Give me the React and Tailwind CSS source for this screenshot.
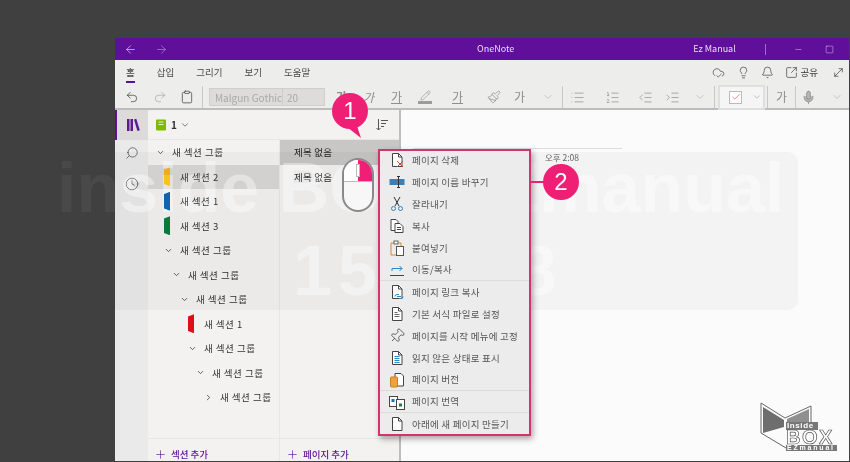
import {
  ArrowLeft, ArrowRight, Bell, Check, ChevronDown, ChevronRight, Clipboard, Clock, CloudCheck, Lightbulb,
  IndentDecrease, IndentIncrease, List, ListOrdered, Minus, MoveDiagonal, Paintbrush, Pencil, Plus, Redo2, Search,
  SquareArrowOutUpRight, Square, Undo2, Mic, Pin,
} from "lucide-react";

const FONT = "font-['Noto_Sans_CJK_KR','Noto_Sans',sans-serif]";

const TABS = ["홈", "삽입", "그리기", "보기", "도움말"];

const SECTIONS = [
  { label: "새 섹션 그룹", indent: 8, chevron: "down" },
  { label: "새 섹션 2", indent: 16, color: "bg-[#f6b21b]", active: true },
  { label: "새 섹션 1", indent: 16, color: "bg-[#0f5a9c]" },
  { label: "새 섹션 3", indent: 16, color: "bg-[#0b7d3e]" },
  { label: "새 섹션 그룹", indent: 16, chevron: "down" },
  { label: "새 섹션 그룹", indent: 24, chevron: "down" },
  { label: "새 섹션 그룹", indent: 32, chevron: "down" },
  { label: "새 섹션 1", indent: 40, color: "bg-[#dd0f1c]" },
  { label: "새 섹션 그룹", indent: 40, chevron: "down" },
  { label: "새 섹션 그룹", indent: 48, chevron: "down" },
  { label: "새 섹션 그룹", indent: 56, chevron: "right" },
];

function Doc({ children }) {
  return (
    <svg viewBox="0 0 16 16" className="h-4 w-4" fill="none" stroke="#444" strokeWidth="1">
      <path d="M3.5 1.5h6l3.5 3.5v9.5h-9.5z" fill="#fff" />
      <path d="M9.5 1.5v3.5h3.5" />
      {children}
    </svg>
  );
}

const MENU = [
  { label: "페이지 삭제", icon: <Doc><path d="M8 9l6 6M14 9l-6 6" stroke="#d8453c" /></Doc> },
  {
    label: "페이지 이름 바꾸기",
    icon: (
      <svg viewBox="0 0 16 16" className="h-4 w-4">
        <rect x="0.5" y="5" width="15" height="6" fill="#3f7fb5" />
        <path d="M8 2.5h3M9.5 2.5v11M8 13.5h3" stroke="#333" fill="none" />
      </svg>
    ),
  },
  {
    label: "잘라내기",
    icon: (
      <svg viewBox="0 0 16 16" className="h-4 w-4" fill="none" stroke="#333">
        <path d="M5 1l5 9M11 1l-5 9" />
        <circle cx="4.5" cy="12.5" r="2" stroke="#2f86c5" />
        <circle cx="11.5" cy="12.5" r="2" stroke="#2f86c5" />
      </svg>
    ),
  },
  {
    label: "복사",
    icon: (
      <svg viewBox="0 0 16 16" className="h-4 w-4" fill="#fff" stroke="#444">
        <path d="M2 1.5h5l2 2v9H2z" />
        <path d="M6 5.5h5l3 3v6H6z" />
        <path d="M8 9.5h4M8 11.5h4" />
      </svg>
    ),
  },
  {
    label: "붙여넣기",
    icon: (
      <svg viewBox="0 0 16 16" className="h-4 w-4" fill="none" stroke="#d98a2b">
        <path d="M2 3h10v12H2z" />
        <rect x="5" y="1" width="4" height="3" fill="#fff" stroke="#666" />
        <rect x="7.5" y="6.5" width="7" height="9" fill="#fff" stroke="#555" />
      </svg>
    ),
  },
  {
    label: "이동/복사",
    divider: true,
    icon: (
      <svg viewBox="0 0 16 16" className="h-4 w-4" fill="none" stroke="#2f86c5">
        <path d="M3 9V6.5h10M10.5 4l2.5 2.5L10.5 9" />
        <path d="M1 13.5h14" stroke="#444" />
      </svg>
    ),
  },
  {
    label: "페이지 링크 복사",
    icon: <Doc><path d="M6 12.5a2 2 0 0 1 2-2h2M14 12.5a2 2 0 0 1-2 2h-2M8 12.5h4" stroke="#2f86c5" /></Doc>,
  },
  { label: "기본 서식 파일로 설정", icon: <Doc><path d="M5.5 6.5h3M5.5 8.5h5M5.5 10.5h5" stroke="#666" /></Doc> },
  { label: "페이지를 시작 메뉴에 고정", icon: <Pin className="h-4 w-4 rotate-45 text-[#444]" strokeWidth={1.2} /> },
  { label: "읽지 않은 상태로 표시", icon: <Doc><path d="M5.5 6.5h5M5.5 8.5h5M5.5 10.5h5M5.5 12.5h5" stroke="#2f86c5" /></Doc> },
  {
    label: "페이지 버전",
    divider: true,
    icon: (
      <svg viewBox="0 0 16 16" className="h-4 w-4">
        <path d="M6 1.5h6l2.5 2.5v10H6z" fill="#fff" stroke="#444" />
        <rect x="1.5" y="5" width="7" height="10" rx="1" fill="#eda33b" stroke="#c87f22" />
      </svg>
    ),
  },
  {
    label: "페이지 번역",
    divider: true,
    icon: (
      <svg viewBox="0 0 16 16" className="h-4 w-4">
        <rect x="0.5" y="2.5" width="8" height="10" fill="#fff" stroke="#444" />
        <rect x="7.5" y="5.5" width="8" height="10" fill="#fff" stroke="#444" />
        <rect x="2.5" y="5" width="3" height="3" fill="#1f6fb2" />
        <rect x="10" y="9.5" width="3" height="3" fill="#227a3d" />
      </svg>
    ),
  },
  { label: "아래에 새 페이지 만들기", icon: <Doc /> },
];

function RibbonText({ children, underline, className = "" }) {
  return (
    <span className={`w-[12px] text-[12px] leading-none text-[#8f8f8f] ${underline ? "underline" : ""} ${className}`}>
      {children}
    </span>
  );
}

function Toolbar() {
  return (
    <div className="flex h-[26px] items-center pl-[10px] text-[#8a8a8a]">
      <Undo2 className="h-[14px] w-[14px] text-[#444]" strokeWidth={1.3} />
      <Redo2 className="ml-[14px] h-[14px] w-[14px] text-[#aaa]" strokeWidth={1.3} />
      <Clipboard className="ml-[13px] h-[14px] w-[14px] text-[#444]" strokeWidth={1.3} />
      <span className="ml-[8px] h-[22px] w-px bg-[#c8c8c8]" />
      <div className="ml-[6px] flex h-[18px] w-[116px] items-center border border-[#d0cdca] bg-[#dedcda] text-[10px] text-[#a9a9a9]">
        <span className="w-[72px] overflow-hidden whitespace-nowrap pl-[5px]">Malgun Gothic</span>
        <span className="h-full w-px bg-[#cfcdcb]" />
        <span className="pl-[4px]">20</span>
      </div>
      <RibbonText className="ml-[11px] font-bold">가</RibbonText>
      <RibbonText className="ml-[15px] italic">가</RibbonText>
      <RibbonText className="ml-[16px]" underline>가</RibbonText>
      <span className="ml-[15px] flex w-[14px] flex-col items-center">
        <Pencil className="h-[11px] w-[11px]" strokeWidth={1.2} />
        <span className="h-[3px] w-[14px] bg-[#9c9c9c]" />
      </span>
      <RibbonText className="ml-[20px]" underline>가</RibbonText>
      <Paintbrush className="ml-[23px] h-[14px] w-[14px]" strokeWidth={1.2} />
      <RibbonText className="ml-[13px]">가</RibbonText>
      <ChevronDown className="ml-[16px] h-[12px] w-[12px] text-[#aaa]" strokeWidth={1.2} />
      <span className="ml-[8px] h-[22px] w-px bg-[#c8c8c8]" />
      <List className="ml-[7px] h-[15px] w-[15px]" strokeWidth={1.1} />
      <ListOrdered className="ml-[20px] h-[15px] w-[15px]" strokeWidth={1.1} />
      <IndentDecrease className="ml-[18px] h-[15px] w-[15px]" strokeWidth={1.1} />
      <IndentIncrease className="ml-[12px] h-[15px] w-[15px]" strokeWidth={1.1} />
      <ChevronDown className="ml-[14px] h-[12px] w-[12px] text-[#aaa]" strokeWidth={1.2} />
      <span className="ml-[8px] h-[22px] w-px bg-[#c8c8c8]" />
      <div className="ml-[3px] flex h-[25px] w-[47px] items-center border-2 border-[#dfdfdf] bg-[#f5f5f5] pl-[9px]">
        <span className="flex h-[13px] w-[13px] items-center justify-center border border-[#bbb] bg-white">
          <Check className="h-[10px] w-[10px] text-[#d8453c]" strokeWidth={1.5} />
        </span>
        <ChevronDown className="ml-[10px] h-[10px] w-[10px]" strokeWidth={1.2} />
      </div>
      <span className="ml-[2px] h-[22px] w-px bg-[#c8c8c8]" />
      <RibbonText className="ml-[8px]">가</RibbonText>
      <span className="ml-[7px] h-[22px] w-px bg-[#c8c8c8]" />
      <Mic className="ml-[5px] h-[15px] w-[15px] fill-[#b5b5b5]" strokeWidth={1.2} />
      <ChevronDown className="ml-[15px] h-[12px] w-[12px] text-[#aaa]" strokeWidth={1.2} />
    </div>
  );
}

function LibraryIcon() {
  return (
    <svg viewBox="0 0 14 14" className="h-[14px] w-[14px]" fill="#5d1a8f">
      <rect x="1" y="1" width="2.5" height="12" />
      <rect x="4.5" y="1" width="2.5" height="12" />
      <path d="M8 1.5l2.3-.8 3.500 11.500-2.400.8z" />
    </svg>
  );
}

function SortIcon() {
  return (
    <svg viewBox="0 0 14 14" className="h-[14px] w-[14px]" fill="none" stroke="#555">
      <path d="M3.5 1v11M1.5 10l2 2 2-2M6 2.5h7M6 5.5h5M6 8.5h3" />
    </svg>
  );
}

function Logo() {
  return (
    <div className="absolute left-[760px] top-[402px] h-[48px] w-[78px]">
      <svg viewBox="0 0 78 48" className="absolute inset-0 h-full w-full" fill="none">
        <path d="M1 1l24 15 26-12v17M1 1v30l25 15" stroke="#666" />
        <path d="M3 5l21 13v7L3 31z" fill="#6e6e6e" />
        <path d="M27 17l22-10v13H27z" fill="#8f8f8f" />
      </svg>
      <div className="absolute left-[26px] top-[20px] flex w-[51px] flex-col font-['Liberation_Sans',sans-serif] font-bold leading-none text-white">
        <span className="w-[32px] bg-[#777] pl-[1px] text-[8px] leading-[8px] tracking-[0.6px]">Inside</span>
        <span className="text-[20px] leading-[15px] tracking-[1.5px] text-white [-webkit-text-stroke:0.7px_#555]">BOX</span>
        <span className="bg-[#777] pl-[1px] text-[7px] leading-[6px] tracking-[1.8px]">EZmanual</span>
      </div>
    </div>
  );
}

function Callout({ n, className }) {
  return (
    <div
      className={`absolute flex h-[36px] w-[36px] items-center justify-center rounded-full bg-[#ee1f74] font-['Liberation_Sans',sans-serif] text-[24px] text-white ${className}`}
    >
      {n}
    </div>
  );
}

function MouseIcon() {
  return (
    <div className="absolute left-[342px] top-[158px] h-[54px] w-[32px] overflow-hidden rounded-[16px] border-2 border-[#8a8a8a] bg-[#f7f7f7]">
      <div className="flex h-[22px] border-b border-[#bbb]">
        <div className="w-[14px] bg-white" />
        <div className="flex-1 bg-[#ee1f74]" />
      </div>
      <span className="absolute left-[12px] top-[4px] h-[13px] w-[4px] border border-[#bbb] bg-white" />
    </div>
  );
}

export default function App() {
  return (
    <div className={`relative h-[462px] w-[850px] overflow-hidden bg-[#404040] pl-[115px] pt-[38px] pr-px pb-px ${FONT}`}>
      <div className="flex h-full flex-col bg-[#fbfbfb]">
        <div className="flex h-[22px] items-center bg-[#5f0f99] text-[9px] text-[#e9dcf2]">
          <ArrowLeft className="ml-[9px] h-[13px] w-[13px]" strokeWidth={1.2} />
          <ArrowRight className="ml-[18px] h-[13px] w-[13px] text-[#b894d2]" strokeWidth={1.2} />
          <span className="ml-[309px]">OneNote</span>
          <span className="ml-[179px]">Ez Manual</span>
          <span className="ml-[29px] h-[11px] w-px bg-[#9c6fc0]" />
          <Minus className="ml-[28px] h-[9px] w-[9px]" strokeWidth={1.2} />
          <Square className="ml-[22px] h-[9px] w-[9px]" strokeWidth={1.2} />
        </div>

        <div className="h-[50px] border-b-2 border-[#bdbdbd] bg-[#ededec]">
          <div className="flex h-[24px] items-center pl-[11px] text-[9.5px] text-[#4a4a4a]">
            {TABS.map((t, i) => (
              <span key={t} className={`relative mr-[22px] ${i === 0 ? "font-medium" : ""}`}>
                {t}
                {i === 0 && <span className="absolute -bottom-[4px] left-0 h-[2px] w-full bg-[#5f0f99]" />}
              </span>
            ))}
            <div className="ml-auto flex items-center pr-[4px] text-[#333]">
              <CloudCheck className="h-[13px] w-[13px]" strokeWidth={1.2} />
              <Lightbulb className="ml-[12px] h-[13px] w-[13px]" strokeWidth={1.2} />
              <Bell className="ml-[11px] h-[13px] w-[13px]" strokeWidth={1.2} />
              <SquareArrowOutUpRight className="ml-[11px] h-[13px] w-[13px]" strokeWidth={1.2} />
              <span className="ml-[3px] text-[9.5px]">공유</span>
              <MoveDiagonal className="ml-[14px] h-[13px] w-[13px]" strokeWidth={1.2} />
            </div>
          </div>
          <Toolbar />
        </div>

        <div className="flex min-h-0 flex-1">
          <div className="flex w-[33px] flex-col items-center bg-[#ebeaea]">
            <div className="flex h-[30px] w-full items-center justify-center border-l-2 border-[#5f0f99] bg-[#dcdbda]">
              <LibraryIcon />
            </div>
            <Search className="mt-[6px] h-[14px] w-[14px] -scale-x-100 text-[#444]" strokeWidth={1.2} />
            <Clock className="mt-[17px] h-[14px] w-[14px] text-[#444]" strokeWidth={1.2} />
          </div>

          <div className="flex w-[253px] flex-col border-r-2 border-[#bdbdbd] bg-[#f3f2f1]">
            <div className="flex h-[30px] items-center border-b border-[#e8e7e6] pl-[7px] pr-[10px]">
              <svg viewBox="0 0 12 12" className="h-[12px] w-[12px]">
                <rect x="1" y="0.5" width="10" height="11" rx="1" fill="#7fba00" />
                <path d="M3.5 3h5M3.5 5.5h5" stroke="#fff" strokeWidth="0.8" />
              </svg>
              <span className="ml-[4px] text-[10px] font-bold text-[#333]">1</span>
              <ChevronDown className="ml-[3px] h-[10px] w-[10px] text-[#333]" strokeWidth={1.5} />
              <span className="ml-auto"><SortIcon /></span>
            </div>

            <div className="flex min-h-0 flex-1">
              <div className="flex w-[132px] flex-col border-r border-[#e8e7e6]">
                <div className="flex-1">
                  {SECTIONS.map((s, i) => (
                    <div
                      key={i}
                      className={`flex h-[24.5px] items-center whitespace-nowrap text-[9.5px] tracking-[0.5px] text-[#333] ${s.active ? "bg-[#dad8d6]" : ""}`}
                      style={{ paddingLeft: s.indent }}
                    >
                      {s.chevron === "down" && <ChevronDown className="mr-[7px] h-[9px] w-[9px] shrink-0" strokeWidth={2} />}
                      {s.chevron === "right" && <ChevronRight className="mr-[7px] h-[9px] w-[9px] shrink-0" strokeWidth={2} />}
                      {s.color && <span className={`mr-[10px] h-[19px] w-[6px] shrink-0 [clip-path:polygon(0_12%,100%_0,100%_100%,0_88%)] ${s.color}`} />}
                      {s.label}
                    </div>
                  ))}
                </div>
                <div className="flex h-[23px] items-center border-t border-[#e8e7e6] pl-[6px] pt-[8px] text-[9.5px] font-medium text-[#5f0f99]">
                  <Plus className="mr-[4px] h-[13px] w-[13px]" strokeWidth={1.2} />
                  섹션 추가
                </div>
              </div>

              <div className="flex flex-1 flex-col">
                <div className="flex-1">
                  <div className="flex h-[24.5px] items-center bg-[#c9c7c5] pl-[14px] text-[9.5px] tracking-[0.2px] text-[#222]">제목 없음</div>
                  <div className="flex h-[24.5px] items-center pl-[14px] text-[9.5px] tracking-[0.2px] text-[#333]">제목 없음</div>
                </div>
                <div className="flex h-[23px] items-center border-t border-[#e8e7e6] pl-[6px] pt-[8px] text-[9.5px] font-medium text-[#5f0f99]">
                  <Plus className="mr-[4px] h-[13px] w-[13px]" strokeWidth={1.2} />
                  페이지 추가
                </div>
              </div>
            </div>
          </div>

          <div className="flex-1 pl-[12px] pt-[38px]">
            <div className="h-px w-[209px] bg-[#dcdcdc]" />
            <div className="pl-[132px] pt-[2px] text-[8.5px] text-[#666]">오후 2:08</div>
          </div>
        </div>
      </div>

      {/* watermark: dodge so it stays faint on the dark page and on the panels */}
      <div className="pointer-events-none absolute left-[115px] top-[152px] h-[158px] w-[683px] rounded-r-[10px] bg-[#000000]/[0.03]" />
      <div className="pointer-events-none absolute left-[57px] top-[153px] flex flex-col items-start font-['Liberation_Sans',sans-serif] font-bold leading-none">
        <div className="whitespace-nowrap text-[70px] text-[#404040]/40 mix-blend-color-dodge">inside BOX EZmanual</div>
        <div className="ml-[236px] mt-[13px] whitespace-nowrap text-[70px] tracking-[6px] text-[#404040]/40 mix-blend-color-dodge">151348</div>
      </div>

      <Logo />

      <div className="absolute left-[378px] top-[149px] h-[287px] w-[153px] overflow-hidden border-2 border-[#d1356f] bg-[#ececec] shadow-[2px_3px_6px_#0005]">
        <div className="-mt-[2px]">
          {MENU.map((m) => (
            <div
              key={m.label}
              className={`flex h-[22px] items-center whitespace-nowrap pl-[9px] text-[9.5px] tracking-[0.25px] text-[#555] ${m.divider ? "border-b border-[#dcdbda]" : ""}`}
            >
              <span className="mr-[7px] flex w-[16px] justify-center">{m.icon}</span>
              {m.label}
            </div>
          ))}
        </div>
      </div>

      <MouseIcon />

      <Callout n="1" className="left-[332px] top-[93px]" />
      <svg viewBox="0 0 20 20" className="absolute left-[345px] top-[123px] h-[20px] w-[20px]">
        <path d="M2 4L12 3L16 15z" fill="#ee1f74" />
      </svg>
      <span className="absolute left-[531px] top-[181px] h-[2px] w-[14px] bg-[#ee1f74]" />
      <Callout n="2" className="left-[543px] top-[164px]" />
    </div>
  );
}
